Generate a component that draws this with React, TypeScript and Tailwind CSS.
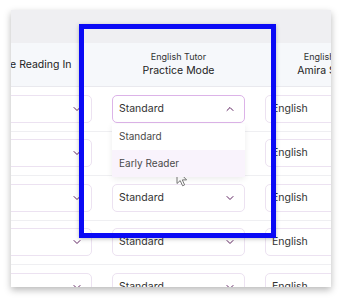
import { ChevronDown, ChevronUp } from 'lucide-react'

const rows = [0, 1, 2, 3, 4]

function Select({ value, open }: { value?: string; open?: boolean }) {
    return (
        <div
            className={
                'flex items-center justify-between h-[28px] rounded-[5px] border bg-white pl-[6px] pr-[8px] text-[10.5px] text-[#333] ' +
                (open ? 'border-[#dcb3e8]' : 'border-[#ece2f1]')
            }
        >
            <span className="truncate">{value}</span>
            {open ? (
                <ChevronUp className="w-[12px] h-[12px] text-[#5e2160] shrink-0" strokeWidth={2} />
            ) : (
                <ChevronDown className="w-[12px] h-[12px] text-[#5e2160] shrink-0" strokeWidth={2} />
            )}
        </div>
    )
}

export default function App() {
    return (
        <div className="relative w-[344px] h-[303px] bg-white overflow-hidden font-['Inter','Liberation_Sans',sans-serif]">
            {/* Card */}
            <div className="ml-[11px] mt-[10px] w-[320px] h-[277px] bg-white overflow-hidden shadow-[0_3px_7px_rgba(0,0,0,0.28)]">
                <div className="h-[33px] bg-[#efeff2]" />

                {/* Header */}
                <div className="flex ml-[-62px] h-[44px] bg-[#f6f8fb] border-b border-[#e9e9ee]">
                    <div className="w-[153px] shrink-0 flex items-center justify-center pr-[4px] text-[10.5px] text-[#222]">
                        Practice Reading In
                    </div>
                    <div className="w-[153px] shrink-0 flex flex-col items-center justify-center leading-none">
                        <span className="text-[9px] text-[#333]">English Tutor</span>
                        <span className="mt-[5px] text-[10.5px] text-[#222]">Practice Mode</span>
                    </div>
                    <div className="w-[153px] shrink-0 flex flex-col items-center justify-center leading-none">
                        <span className="text-[9px] text-[#333]">English Tutor</span>
                        <span className="mt-[5px] text-[10.5px] text-[#222]">Amira Speaks</span>
                    </div>
                </div>

                {/* Rows */}
                {rows.map((r) => (
                    <div key={r} className="flex ml-[-62px] h-[44.5px] items-center border-b border-[#efeff2] bg-white">
                        <div className="w-[153px] shrink-0 px-[10px]">
                            <Select value="English" />
                        </div>
                        <div className="relative w-[153px] shrink-0 px-[10px]">
                            <Select value={r === 1 ? undefined : 'Standard'} open={r === 0} />
                            {r === 0 && (
                                <div className="absolute left-[10px] right-[10px] top-[29px] z-10 bg-white rounded-b-[4px] shadow-[0_2px_6px_rgba(0,0,0,0.08)] text-[10px] text-[#4a4a4a]">
                                    <div className="h-[26px] flex items-center pl-[7px]">Standard</div>
                                    <div className="h-[27px] flex items-center pl-[7px] bg-[#f9f3fc]">Early Reader</div>
                                </div>
                            )}
                        </div>
                        <div className="w-[153px] shrink-0 px-[10px]">
                            <Select value="English" />
                        </div>
                    </div>
                ))}
            </div>

            {/* Highlight frame */}
            <div className="absolute left-[79px] top-[24px] w-[197px] h-[214px] border-[5px] border-[#0a0af5] shadow-[0_1px_4px_rgba(0,0,0,0.25)]" />

            {/* Cursor */}
            <svg className="absolute left-[176px] top-[169px]" width="13" height="18" viewBox="0 0 13 18">
                <path d="M1 1 L1 14.5 L4.2 11.6 L6.6 16.8 L8.6 15.9 L6.3 10.9 L10.6 10.9 Z" fill="#fff" stroke="#6a6a6a" strokeWidth="0.9" strokeLinejoin="round" />
            </svg>
        </div>
    )
}
